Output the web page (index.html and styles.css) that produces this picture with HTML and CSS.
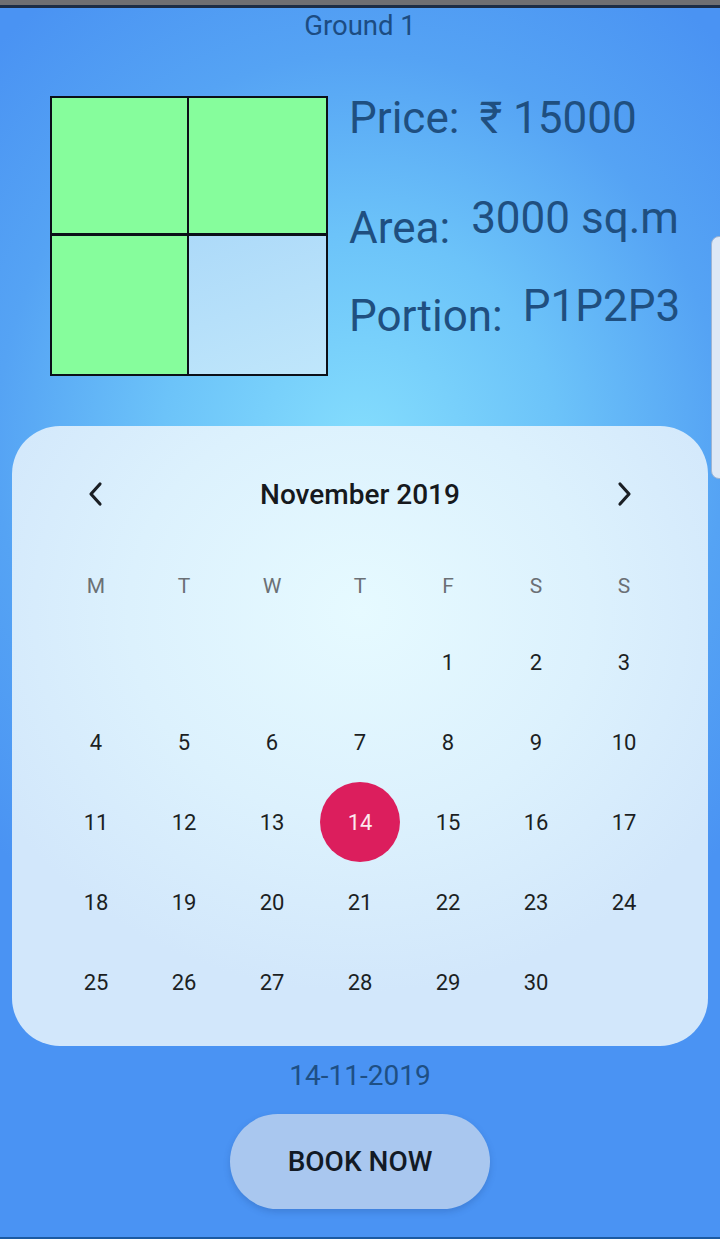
FILE: index.html
```html
<!DOCTYPE html>
<html>
<head>
<meta charset="utf-8">
<link rel="stylesheet" href="styles.css">
</head>
<body>
<div class="screen">
  <div class="statusbar"></div>
  <div class="statusline"></div>
  <h1 class="title">Ground 1</h1>
  <section class="plot">
    <div class="grid">
      <div class="cell taken c1"></div>
      <div class="cell taken c2"></div>
      <div class="cell taken c3"></div>
      <div class="cell free c4"></div>
    </div>
    <div class="info">
      <div class="row row-price"><span class="label">Price:</span><span class="value">₹ 15000</span></div>
      <div class="row row-area"><span class="label">Area:</span><span class="value raised">3000 sq.m</span></div>
      <div class="row row-portion"><span class="label">Portion:</span><span class="value raised">P1P2P3</span></div>
    </div>
  </section>
  <section class="calendar">
    <div class="cal-head">
      <span class="nav"><svg width="16" height="26" viewBox="0 0 16 26"><path d="M12 3 L3 13 L12 23" fill="none" stroke="#1b1f24" stroke-width="3.2" stroke-linecap="round" stroke-linejoin="round"/></svg></span>
      <span class="month">November 2019</span>
      <span class="nav"><svg width="16" height="26" viewBox="0 0 16 26"><path d="M4 3 L13 13 L4 23" fill="none" stroke="#1b1f24" stroke-width="3.2" stroke-linecap="round" stroke-linejoin="round"/></svg></span>
    </div>
    <div class="weekdays">
      <span>M</span><span>T</span><span>W</span><span>T</span><span>F</span><span>S</span><span>S</span>
    </div>
    <div class="days">
      <span></span><span></span><span></span><span></span><span>1</span><span>2</span><span>3</span>
      <span>4</span><span>5</span><span>6</span><span>7</span><span>8</span><span>9</span><span>10</span>
      <span>11</span><span>12</span><span>13</span><span class="selected"><b>14</b></span><span>15</span><span>16</span><span>17</span>
      <span>18</span><span>19</span><span>20</span><span>21</span><span>22</span><span>23</span><span>24</span>
      <span>25</span><span>26</span><span>27</span><span>28</span><span>29</span><span>30</span><span></span>
    </div>
  </section>
  <p class="picked">14-11-2019</p>
  <div class="actions"><button class="book">BOOK NOW</button></div>
  <div class="bottomline"></div>
  <div class="edge-tab"></div>
</div>
</body>
</html>
```

FILE: styles.css
```css
* { box-sizing: border-box; }
html, body { margin: 0; padding: 0; }
body {
  width: 720px;
  height: 1239px;
  overflow: hidden;
  font-family: Roboto, "Noto Sans", "Liberation Sans", sans-serif;
}
.screen {
  position: relative;
  width: 720px;
  height: 1239px;
  display: flex;
  flex-direction: column;
  background:
    radial-gradient(ellipse 520px 560px at 50% 36%, #84ddfd 0%, #6cc3f9 38%, #55a3f4 70%, #4a93f3 100%);
  background-color: #4a93f3;
}
.statusbar { height: 5px; background: #6f6f72; flex: none; }
.statusline { height: 3px; background: #1d2d45; flex: none; }
.title {
  margin: 3px 0 0;
  text-align: center;
  font-size: 27.5px;
  line-height: 30px;
  font-weight: 400;
  color: #1c4c82;
}
.plot {
  display: flex;
  margin-top: 55px;
  padding-left: 50px;
  flex: none;
}
.grid {
  width: 278px;
  height: 280px;
  display: grid;
  grid-template-columns: 1fr 1fr;
  grid-template-rows: 1fr 1fr;
  border: 2px solid #0b0f18;
  flex: none;
}
.cell { border: 0 solid #0b0f18; }
.taken { background: #86fd9c; }
.free { background: linear-gradient(160deg, #addaf9, #bfe6fb); }
.c1 { border-right-width: 2px; border-bottom-width: 3px; }
.c2 { border-bottom-width: 3px; }
.c3 { border-right-width: 2px; }
.info {
  margin-left: 21px;
  color: #1f4f80;
  font-size: 44px;
  line-height: 48px;
}
.row { display: flex; align-items: flex-end; gap: 20px; white-space: nowrap; }
.row-price { margin-top: -2px; }
.row-area { margin-top: 52px; }
.row-portion { margin-top: 30px; }
.value.raised { margin-bottom: 10px; }
.row-area .label { margin-right: 1px; }

.calendar {
  margin: 50px 12px 0;
  height: 620px;
  border-radius: 48px;
  background: radial-gradient(ellipse 420px 380px at 50% 30%, #e6faff 0%, #dcf1fd 55%, #d2e7fb 100%);
  padding: 40px 40px 0;
  flex: none;
}
.cal-head {
  height: 56px;
  display: flex;
  align-items: center;
  justify-content: space-between;
}
.nav {
  width: 88px;
  display: flex;
  justify-content: center;
  align-items: center;
}
.month {
  font-size: 28px;
  font-weight: 500;
  color: #16191d;
}
.weekdays {
  margin-top: 28px;
  height: 72px;
  display: grid;
  grid-template-columns: repeat(7, 88px);
  align-items: center;
  justify-items: center;
  font-size: 21px;
  color: #6b7075;
}
.days {
  display: grid;
  grid-template-columns: repeat(7, 88px);
  grid-auto-rows: 80px;
  align-items: center;
  justify-items: center;
  font-size: 22px;
  color: #1c1f23;
}
.days span { display: flex; align-items: center; justify-content: center; }
.selected b {
  width: 80px;
  height: 80px;
  border-radius: 50%;
  background: #dc1e5d;
  color: #fde9ef;
  font-weight: 400;
  display: flex;
  align-items: center;
  justify-content: center;
}
.picked {
  margin: 13px 0 0;
  text-align: center;
  font-size: 28px;
  line-height: 34px;
  color: #1e4f84;
}
.actions {
  display: flex;
  justify-content: center;
  margin-top: 21px;
}
.book {
  width: 260px;
  height: 95px;
  border: none;
  border-radius: 48px;
  background: #a9c7ef;
  box-shadow: 0 3px 6px rgba(30, 70, 140, 0.25);
  font-family: Roboto, "Noto Sans", "Liberation Sans", sans-serif;
  font-size: 28px;
  font-weight: 500;
  color: #121a25;
}
.bottomline {
  position: absolute;
  left: 0;
  right: 0;
  bottom: 0;
  height: 2px;
  background: #1b5aa2;
}
.edge-tab {
  position: absolute;
  left: 711px;
  top: 236px;
  width: 24px;
  height: 243px;
  border-radius: 8px;
  background: #dde8f6;
  border: 1px solid #9cb3d3;
}
```
